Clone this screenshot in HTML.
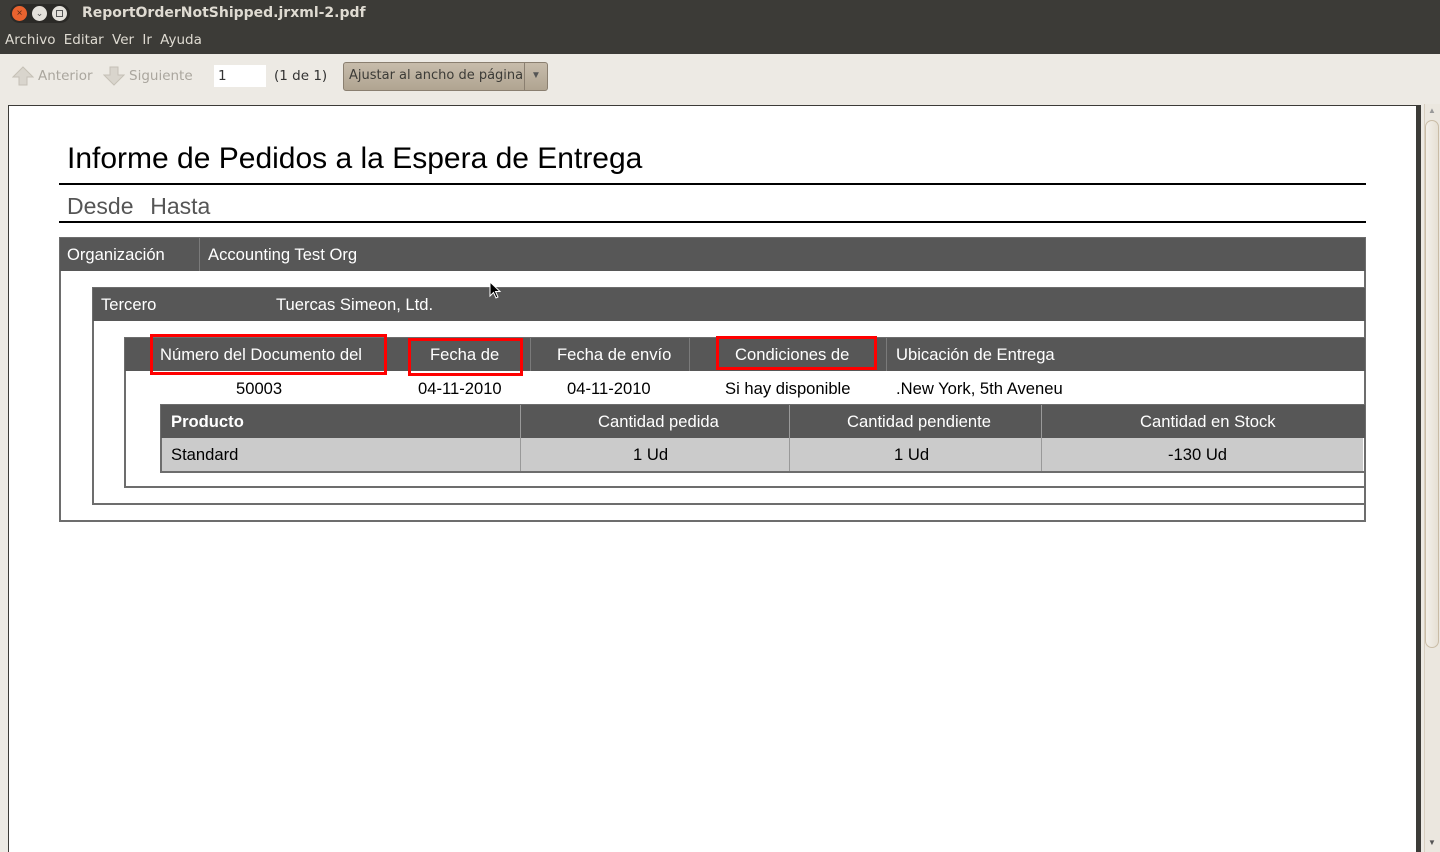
<!DOCTYPE html>
<html><head><meta charset="utf-8"><style>
*{margin:0;padding:0;box-sizing:border-box}
body{width:1440px;height:852px;overflow:hidden;background:#edeae4;font-family:"Liberation Sans",sans-serif;position:relative}
.a{position:absolute}
.t{position:absolute;white-space:nowrap}
.dk{background:#575757}
.w{color:#fff}
.box{position:absolute;border:2px solid #6d6d6d}
.red{position:absolute;border:3px solid #f00}
.vl{position:absolute;width:1px;background:#7a7a7a}
.f{font-size:16.6px}
</style></head><body>
<div class="a" style="left:0;top:0;width:1440px;height:54px;background:#3c3b37"></div>
<div class="a" style="left:10px;top:4px;width:60px;height:19px;border-radius:10px;background:#2b2a27"></div>
<div class="a" style="left:12px;top:6px;width:15px;height:15px;border-radius:50%;background:#e9632f;color:#5a2a18;font-size:10px;text-align:center;line-height:15px">×</div>
<div class="a" style="left:32px;top:6px;width:15px;height:15px;border-radius:50%;background:#e4e1db;color:#555;font-size:9px;text-align:center;line-height:15px">⌄</div>
<div class="a" style="left:52px;top:6px;width:15px;height:15px;border-radius:50%;background:#e4e1db"></div>
<div class="a" style="left:56px;top:10px;width:7px;height:7px;border:1.5px solid #555"></div>
<div class="t" style="left:82px;top:5px;font-family:'DejaVu Sans',sans-serif;font-weight:bold;font-size:14px;color:#dfdbd2">ReportOrderNotShipped.jrxml-2.pdf</div>
<div class="t" style="left:5px;top:32px;font-family:'DejaVu Sans',sans-serif;font-size:13.5px;color:#dfdbd2;word-spacing:4px">Archivo Editar Ver Ir Ayuda</div>
<div class="a" style="left:0;top:54px;width:1440px;height:46px;background:#edeae4"></div>
<svg class="a" style="left:12px;top:65px" width="22" height="22"><path d="M11 2 L21 12 L15 12 L15 20 L7 20 L7 12 L1 12 Z" fill="#d9d5cd" stroke="#c5c0b6"/></svg>
<div class="t" style="left:38px;top:68px;font-family:'DejaVu Sans',sans-serif;font-size:13.5px;color:#aaa69e">Anterior</div>
<svg class="a" style="left:103px;top:65px" width="22" height="22"><path d="M11 20 L21 10 L15 10 L15 2 L7 2 L7 10 L1 10 Z" fill="#d9d5cd" stroke="#c5c0b6"/></svg>
<div class="t" style="left:129px;top:68px;font-family:'DejaVu Sans',sans-serif;font-size:13.5px;color:#aaa69e">Siguiente</div>
<div class="a" style="left:214px;top:65px;width:52px;height:22px;background:#fff"></div>
<div class="t" style="left:218px;top:68px;font-family:'DejaVu Sans',sans-serif;font-size:13.5px;color:#333">1</div>
<div class="t" style="left:274px;top:68px;font-family:'DejaVu Sans',sans-serif;font-size:13.5px;color:#333">(1 de 1)</div>
<div class="a" style="left:343px;top:62px;width:205px;height:29px;border:1px solid #8a7f70;border-radius:3px;background:linear-gradient(#c7bcab,#b0a491)"></div>
<div class="a" style="left:524px;top:63px;width:1px;height:27px;background:#8a7f70"></div>
<div class="t" style="left:349px;top:68px;font-family:'DejaVu Sans',sans-serif;font-size:13px;color:#3c3b37">Ajustar al ancho de página</div>
<div class="t" style="left:531px;top:70px;font-size:10px;color:#555">▼</div>
<div class="a" style="left:8px;top:105px;width:1413px;height:747px;background:#3c3b37"></div>
<div class="a" style="left:9px;top:106px;width:1407px;height:746px;background:#fff"></div>
<div class="a" style="left:1424px;top:104px;width:16px;height:748px;background:#ebe7df;border-left:1px solid #d8cfc0"></div>
<div class="a" style="left:1425px;top:120px;width:14px;height:528px;border:1px solid #c9bca6;border-radius:7px;background:linear-gradient(90deg,#f3f0ea,#e6e0d4)"></div>
<div class="t" style="left:1428px;top:106px;font-size:8px;color:#999">▲</div>
<div class="t" style="left:1428px;top:838px;font-size:8px;color:#555">▼</div>

<div class="t" style="left:67px;top:142px;font-size:30px;color:#000">Informe de Pedidos a la Espera de Entrega</div>
<div class="a" style="left:59px;top:183px;width:1307px;height:2px;background:#000"></div>
<div class="t" style="left:67px;top:193px;font-size:23px;color:#555;word-spacing:2px">Desde&nbsp; Hasta</div>
<div class="a" style="left:59px;top:221px;width:1307px;height:2px;background:#000"></div>

<div class="box" style="left:59px;top:237px;width:1307px;height:285px"></div>
<div class="a dk" style="left:60px;top:238px;width:1305px;height:33px"></div>
<div class="vl" style="left:199px;top:238px;height:33px"></div>
<div class="t w f" style="left:67px;top:245px">Organización</div>
<div class="t w f" style="left:208px;top:245px">Accounting Test Org</div>

<div class="box" style="left:92px;top:287px;width:1274px;height:218px"></div>
<div class="a dk" style="left:93px;top:288px;width:1272px;height:33px"></div>
<div class="t w f" style="left:101px;top:295px">Tercero</div>
<div class="t w f" style="left:276px;top:295px">Tuercas Simeon, Ltd.</div>

<div class="box" style="left:124px;top:337px;width:1242px;height:151px"></div>
<div class="a dk" style="left:125px;top:338px;width:1240px;height:33px"></div>
<div class="vl" style="left:530px;top:338px;height:33px"></div>
<div class="vl" style="left:689px;top:338px;height:33px"></div>
<div class="vl" style="left:886px;top:338px;height:33px"></div>
<div class="t w f" style="left:160px;top:345px">Número del Documento del</div>
<div class="t w f" style="left:430px;top:345px">Fecha de</div>
<div class="t w f" style="left:557px;top:345px">Fecha de envío</div>
<div class="t w f" style="left:735px;top:345px">Condiciones de</div>
<div class="t w f" style="left:896px;top:345px">Ubicación de Entrega</div>
<div class="t f" style="left:236px;top:379px">50003</div>
<div class="t f" style="left:418px;top:379px">04-11-2010</div>
<div class="t f" style="left:567px;top:379px">04-11-2010</div>
<div class="t f" style="left:725px;top:379px">Si hay disponible</div>
<div class="t f" style="left:896px;top:379px">.New York, 5th Aveneu</div>

<div class="box" style="left:160px;top:404px;width:1206px;height:69px"></div>
<div class="a dk" style="left:161px;top:405px;width:1204px;height:33px"></div>
<div class="a" style="left:162px;top:438px;width:1201px;height:33px;background:#cbcbcb"></div>
<div class="vl" style="left:520px;top:405px;height:66px;background:#999"></div>
<div class="vl" style="left:789px;top:405px;height:66px;background:#999"></div>
<div class="vl" style="left:1041px;top:405px;height:66px;background:#999"></div>
<div class="t w f" style="left:171px;top:412px;font-weight:bold">Producto</div>
<div class="t w f" style="left:598px;top:412px">Cantidad pedida</div>
<div class="t w f" style="left:847px;top:412px">Cantidad pendiente</div>
<div class="t w f" style="left:1140px;top:412px">Cantidad en Stock</div>
<div class="t f" style="left:171px;top:445px">Standard</div>
<div class="t f" style="left:633px;top:445px">1 Ud</div>
<div class="t f" style="left:894px;top:445px">1 Ud</div>
<div class="t f" style="left:1168px;top:445px">-130 Ud</div>

<div class="red" style="left:150px;top:334px;width:237px;height:41px"></div>
<div class="red" style="left:408px;top:338px;width:115px;height:38px"></div>
<div class="red" style="left:716px;top:336px;width:161px;height:34px"></div>
<svg class="a" style="left:489px;top:281px" width="14" height="20"><path d="M1 1 L1 15 L4.5 11.5 L7 17 L9 16 L6.5 10.5 L11 10.5 Z" fill="#000" stroke="#fff" stroke-width="1"/></svg>
</body></html>
